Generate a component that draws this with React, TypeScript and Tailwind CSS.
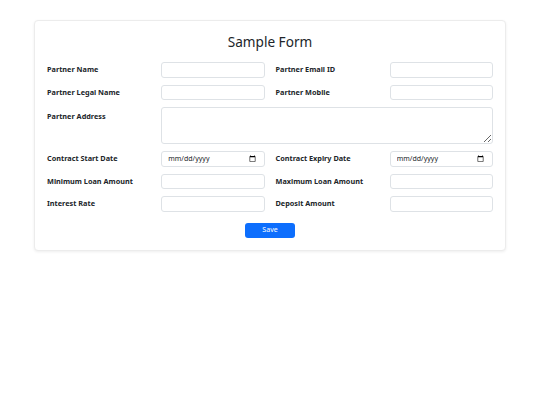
const fieldClass =
  'h-[15.5px] w-full rounded-[3px] border border-[#dee2e6] bg-white px-[6px] text-[7px] text-[#212529] outline-none';

const dateClass =
  fieldClass +
  ' [&::-webkit-datetime-edit-text]:p-0 [&::-webkit-datetime-edit-month-field]:p-0 [&::-webkit-datetime-edit-day-field]:p-0 [&::-webkit-datetime-edit-year-field]:p-0 [&::-webkit-datetime-edit-fields-wrapper]:p-0 [&::-webkit-datetime-edit]:p-0';

function Label({ children, top }: { children: string; top?: boolean }) {
  return (
    <div className={`flex h-[15.5px] ${top ? 'items-start pt-[4px]' : 'items-center'}`}>
      <span className="text-[7.3px] font-bold text-[#212529]">{children}</span>
    </div>
  );
}

export default function App() {
  return (
    <div className="min-h-screen bg-white pt-[20px] font-['Noto_Sans',sans-serif]">
      <div className="mx-[34px] rounded-[4px] border border-[#ececec] bg-white px-[12px] pt-[11px] pb-[12px] shadow-[0_1px_3px_rgba(0,0,0,0.07)]">
        <h1 className="text-center text-[13.6px] leading-[20px] text-[#212529]">Sample Form</h1>

        <div className="mt-[10px] grid grid-cols-4 gap-x-[11px] gap-y-[7px]">
          <Label>Partner Name</Label>
          <input className={fieldClass} />
          <Label>Partner Email ID</Label>
          <input className={fieldClass} />

          <Label>Partner Legal Name</Label>
          <input className={fieldClass} />
          <Label>Partner Mobile</Label>
          <input className={fieldClass} />

          <Label top>Partner Address</Label>
          <textarea className="col-span-3 h-[37px] w-full rounded-[3px] border border-[#dee2e6] bg-white px-[6px] text-[7px] outline-none" />

          <Label>Contract Start Date</Label>
          <input type="date" className={dateClass} />
          <Label>Contract Expiry Date</Label>
          <input type="date" className={dateClass} />

          <Label>Minimum Loan Amount</Label>
          <input className={fieldClass} />
          <Label>Maximum Loan Amount</Label>
          <input className={fieldClass} />

          <Label>Interest Rate</Label>
          <input className={fieldClass} />
          <Label>Deposit Amount</Label>
          <input className={fieldClass} />
        </div>

        <div className="mt-[11px] flex justify-center">
          <button className="h-[15.7px] w-[50px] rounded-[3px] bg-[#0d6efd] text-[7px] text-white">
            Save
          </button>
        </div>
      </div>
    </div>
  );
}
